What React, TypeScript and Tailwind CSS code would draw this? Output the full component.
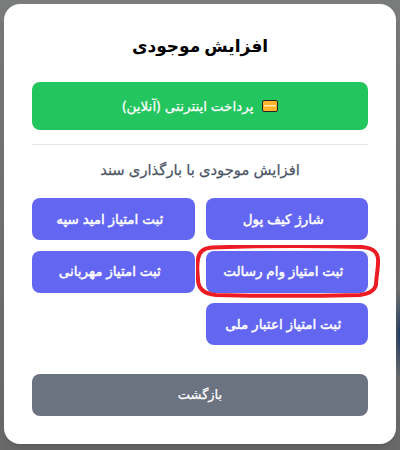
const actions = [
  { label: "شارژ کیف پول" },
  { label: "ثبت امتیاز امید سپه" },
  { label: "ثبت امتیاز وام رسالت", marked: true },
  { label: "ثبت امتیاز مهربانی" },
  { label: "ثبت امتیاز اعتبار ملی" },
];

export default function App() {
  return (
    <div
      dir="rtl"
      className="flex h-[450px] w-[400px] overflow-hidden bg-[radial-gradient(ellipse_7px_45px_at_100%_335px,#1d3a66,transparent),linear-gradient(#7a7b7b,#6a6a6a)] p-1 font-['Inter','DejaVu_Sans',sans-serif]"
    >
      <div className="flex h-[440px] w-full flex-col rounded-2xl bg-white px-7 pt-[25px] shadow-lg">
        <h2 className="mb-[19px] text-center text-[17px] leading-[34px] font-bold text-black">افزایش موجودی</h2>

        <button className="flex h-12 w-full items-center justify-center gap-[9px] rounded-lg bg-[#22c55e] text-[13.5px] text-white [-webkit-text-stroke:0.25px]">
          <svg width="16" height="12" viewBox="0 0 16 12">
            <rect x="0.5" y="0.5" width="15" height="11" rx="1.5" fill="#fbb42c" stroke="#222" />
            <rect x="2" y="5" width="12" height="1.5" fill="#fde8b0" />
          </svg>
          پرداخت اینترنتی (آنلاین)
        </button>

        <hr className="mt-[14px] border-gray-200" />

        <p className="mt-[15px] mb-[18px] text-center text-[14.75px] leading-5 text-gray-600 [-webkit-text-stroke:0.25px]">
          افزایش موجودی با بارگذاری سند
        </p>

        <div className="grid grid-cols-2 gap-x-[11px] gap-y-[10.6px]">
          {actions.map((a) => (
            <div key={a.label} className="relative">
              <button className="h-[42px] w-full rounded-lg bg-[#6366f1] pr-[7px] text-[13.5px] text-white [-webkit-text-stroke:0.45px]">
                {a.label}
              </button>
              {a.marked && (
                <svg
                  className="pointer-events-none absolute top-[-6px] left-[-10px]"
                  width="184"
                  height="54"
                  viewBox="0 0 184 54"
                  fill="none"
                >
                  <path
                    d="M16 2.5 C60 1 130 1 166 2 C178 3 183 8 182 18 C182 24 180 34 180 40 C178 47 172 49 164 50 C120 51 60 51 20 50 C8 49 2 44 2 34 C1 26 1 20 2 14 C3 6 8 3 16 2.5 Z"
                    stroke="#ed1c24"
                    strokeWidth="4"
                  />
                </svg>
              )}
            </div>
          ))}
        </div>

        <button className="mt-[29px] h-[42px] w-full rounded-lg bg-[#6b7280] text-[13px] text-white [-webkit-text-stroke:0.25px]">
          بازگشت
        </button>
      </div>
    </div>
  );
}
